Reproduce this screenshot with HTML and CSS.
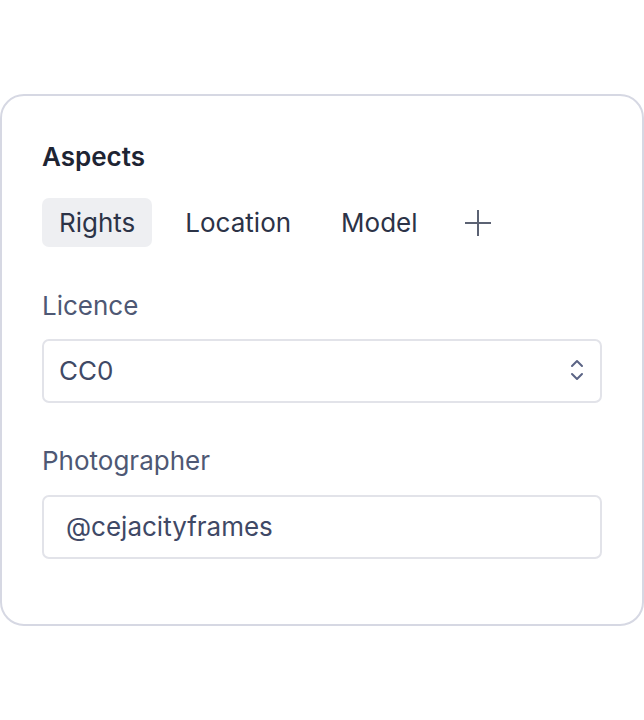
FILE: index.html
```html
<!DOCTYPE html>
<html>
<head>
<meta charset="utf-8">
<link rel="stylesheet" href="styles.css">
</head>
<body>
<div class="card">
  <h2 class="title">Aspects</h2>
  <div class="tabs">
    <span class="tab active">Rights</span>
    <span class="tab">Location</span>
    <span class="tab">Model</span>
    <span class="tab add"><svg width="26" height="26" viewBox="0 0 26 26"><path d="M13 0v26M0 13h26" stroke="#5b6273" stroke-width="2" fill="none"/></svg></span>
  </div>
  <div class="field first">
    <div class="label">Licence</div>
    <div class="control select">
      <span>CC0</span>
      <svg class="chev" width="14" height="24" viewBox="0 0 14 24"><path d="M2 8l5-5 5 5M2 16l5 5 5-5" stroke="#5b6485" stroke-width="2" fill="none" stroke-linecap="round" stroke-linejoin="round"/></svg>
    </div>
  </div>
  <div class="field second">
    <div class="label">Photographer</div>
    <div class="control input">@cejacityframes</div>
  </div>
</div>
</body>
</html>
```

FILE: styles.css
```css
* { box-sizing: border-box; }
html, body { margin: 0; padding: 0; background: #fff; }
body { font-family: Inter, "Noto Sans", sans-serif; padding-top: 94px; }
.card {
  width: 644px;
  height: 532px;
  border: 2px solid #d6d8e3;
  border-radius: 24px;
  padding: 45px 40px 40px;
  display: flex;
  flex-direction: column;
}
.title {
  margin: 0;
  font-size: 26px;
  line-height: 32px;
  font-weight: 600;
  color: #1e2433;
}
.tabs {
  margin-top: 25px;
  display: flex;
  align-items: center;
  gap: 16px;
}
.tab {
  font-size: 26px;
  line-height: 32px;
  padding: 9px 17px 8px;
  color: #2c3347;
  border-radius: 7px;
}
.tab.active { background: #eeeff2; }
.tab.add { display: flex; align-items: center; padding: 12px 0 11px 14px; }
.field { display: flex; flex-direction: column; }
.field.first { margin-top: 43px; }
.field.first .label { margin-bottom: 17px; }
.field.second { margin-top: 42px; }
.field.second .label { margin-bottom: 18px; }
.label {
  font-size: 26px;
  line-height: 32px;
  color: #4e5874;
}
.control {
  height: 64px;
  border: 2px solid #e2e3e9;
  border-radius: 7px;
  font-size: 26px;
  color: #3f4966;
  display: flex;
  align-items: center;
  padding-bottom: 2px;
}
.select { padding-left: 15px; padding-right: 16px; justify-content: space-between; }
.input { padding-left: 22px; padding-right: 22px; }
```
